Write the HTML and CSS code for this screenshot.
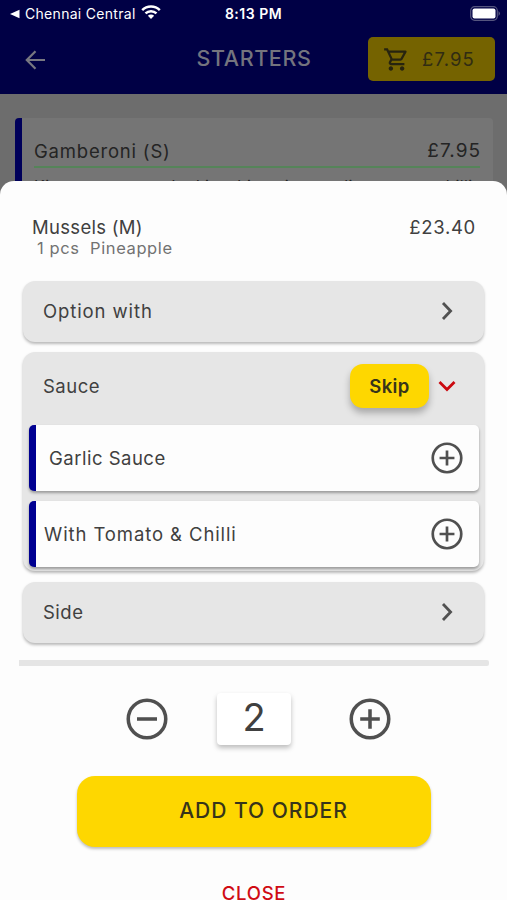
FILE: index.html
```html
<!DOCTYPE html>
<html lang="en">
<head>
<meta charset="utf-8">
<meta name="viewport" content="width=device-width">
<title>Starters</title>
<link rel="stylesheet" href="styles.css">
</head>
<body>
<svg class="defs" width="0" height="0" aria-hidden="true">
  <symbol id="plus" viewBox="0 0 24 24"><circle cx="12" cy="12" r="9" /><path d="M12 7.300v9.400M7.300 12h9.400" /></symbol>
  <symbol id="minus" viewBox="0 0 24 24"><circle cx="12" cy="12" r="9" /><path d="M7.200 12h9.600" /></symbol>
  <symbol id="chevron" viewBox="0 0 12 20"><path d="M2 2l7.600 8L2 18" /></symbol>
</svg>
<div class="screen">
  <header class="header">
    <div class="status">
      <div class="carrier">
        <svg width="10" height="10" viewBox="0 0 10 10"><path d="M0 5L9.500 .8v8.400z" fill="#fff" /></svg>
        <span>Chennai Central</span>
        <svg class="wifi" width="20" height="14" viewBox="0 0 20 14" fill="none" stroke="#fff" stroke-width="2.5"><path d="M1.200 5.200a12.500 12.500 0 0 1 17.600 0M4.500 8.400a7.800 7.800 0 0 1 11 0" /><path d="M6.900 10.700a4.400 4.400 0 0 1 6.200 0L10 13.900z" fill="#fff" stroke="none" /></svg>
      </div>
      <span class="time">8:13 PM</span>
      <svg class="battery" width="31" height="15" viewBox="0 0 31 15"><rect x=".7" y=".7" width="26.600" height="13.600" rx="4" fill="none" stroke="#55557f" stroke-width="1.2" /><rect x="2.500" y="2.500" width="23" height="10" rx="2" fill="#fff" /><path d="M28.500 5v5q3-2.500 0-5" fill="#55557f" /></svg>
    </div>
    <div class="nav">
      <svg class="back" width="22" height="20" viewBox="0 0 22 20"><path d="M20 10H2M10.500 1.200L1.800 10l8.700 8.800" /></svg>
      <h1 class="title">STARTERS</h1>
      <div class="cart">
        <svg width="27" height="27" viewBox="0 0 24 24" fill="#27240f"><path d="M15.550 13c.75 0 1.410-.41 1.750-1.030l3.580-6.490c.37-.66-.11-1.480-.87-1.480H5.210L4.270 2H1v2h2l3.600 7.590-1.350 2.440C4.520 15.370 5.480 17 7 17h12v-2H7l1.100-2h7.450zM6.160 6h12.150l-2.760 5H8.530L6.160 6zM7 18c-1.100 0-1.990.9-1.990 2S5.900 22 7 22s2-.9 2-2-.9-2-2-2zm10 0c-1.100 0-1.990.9-1.990 2s.89 2 1.990 2 2-.9 2-2-.9-2-2-2z" /></svg>
        <span>£7.95</span>
      </div>
    </div>
  </header>
  <article class="dish">
    <div class="dish-head"><span>Gamberoni (S)</span><span class="price">£7.95</span></div>
    <p class="dish-info">King prawns, cooked in white wine, garlic, tomato, chilli</p>
  </article>
  <main class="sheet">
    <div class="item-head"><span class="item-name">Mussels (M)</span><span class="item-price">£23.40</span></div>
    <div class="item-sub">1 pcs&nbsp; Pineapple</div>
    <section class="group">
      <div class="group-row"><span class="wide">Option with</span><svg class="chevron" width="12" height="20"><use href="#chevron" /></svg></div>
    </section>
    <section class="group open">
      <div class="group-row"><span>Sauce</span><button class="skip">Skip</button><svg class="down" width="18" height="12" viewBox="0 0 18 12"><path d="M1.500 2L9 9.500 16.500 2" /></svg></div>
      <div class="choice first"><span>Garlic Sauce</span><svg class="round" width="38" height="38"><use href="#plus" /></svg></div>
      <div class="choice"><span class="wide">With Tomato &amp; Chilli</span><svg class="round" width="38" height="38"><use href="#plus" /></svg></div>
    </section>
    <section class="group side">
      <div class="group-row"><span>Side</span><svg class="chevron" width="12" height="20"><use href="#chevron" /></svg></div>
    </section>
    <div class="divider"></div>
    <div class="quantity">
      <svg class="round" width="50" height="50"><use href="#minus" /></svg>
      <div class="count">2</div>
      <svg class="round" width="50" height="50"><use href="#plus" /></svg>
    </div>
    <button class="add">ADD TO ORDER</button>
    <div class="close">CLOSE</div>
  </main>
</div>
</body>
</html>
```
FILE: styles.css
```css
* { box-sizing: border-box; }
body { margin: 0; font-family: Inter, "Liberation Sans", sans-serif; color: #404040; }
button { border: 0; padding: 0; font-family: inherit; }
.defs { position: absolute; }
.screen { position: relative; width: 507px; height: 900px; overflow: hidden; background: #6d6d6d; }
.header { height: 94px; background: #000045; }
.status { height: 27px; display: grid; grid-template-columns: 1fr auto 1fr; align-items: center; padding: 0 6px 0 10px; color: #fff; }
.carrier { display: flex; align-items: center; gap: 5px; font-size: 14px; letter-spacing: .3px; }
.carrier .wifi { margin-top: -3px; }
.time { margin-left: -4px; font-size: 14px; font-weight: 600; letter-spacing: .5px; }
.battery { justify-self: end; }
.nav { display: grid; grid-template-columns: 1fr auto 1fr; align-items: center; height: 65px; padding: 0 12px 0 25px; }
.back { fill: none; stroke: #777781; stroke-width: 2.2; }
.title { margin: -3px 12px 0 0; font-size: 21.500px; line-height: 24px; font-weight: 450; color: #74747e; letter-spacing: .6px; }
.cart { justify-self: end; width: 127px; height: 44px; margin-top: -1px; padding-left: 15px; display: flex; align-items: center; gap: 12px; background: #756300; border-radius: 5px; color: #302c13; font-size: 18.500px; letter-spacing: 1.1px; }
.dish { margin: 24px 14px 0 15px; height: 120px; background: #757575; border-left: 7px solid #00005a; border-radius: 4px; padding: 20px 13px 0 12px; color: #242424; }
.dish-head { display: flex; justify-content: space-between; height: 30px; line-height: 26px; border-bottom: 2px solid #558459; font-size: 18.500px; letter-spacing: .8px; }
.dish-head .price { font-size: 19px; letter-spacing: 1px; margin-right: -1px; }
.dish-info { margin: 8px 0 0; font-size: 16px; line-height: 20px; letter-spacing: .35px; white-space: nowrap; }
.sheet { position: absolute; inset: 181px 0 0; padding: 34px 18px 0 19px; background: #fdfdfd; border-radius: 14px 14px 0 0; }
.item-head { display: flex; justify-content: space-between; padding: 0 13px; font-size: 18.500px; line-height: 24px; letter-spacing: .3px; }
.item-price { letter-spacing: .7px; }
.item-sub { padding-left: 18px; font-size: 16.500px; line-height: 19px; height: 42px; color: #727272; letter-spacing: .6px; }
.group { margin: 0 5px 10px 4px; height: 61px; background: #e6e6e6; border-radius: 12px; box-shadow: 0 2px 3px #00000045; padding: 0 5px; }
.group-row { height: 60px; display: flex; align-items: center; padding: 0 26px 0 15px; font-size: 18.500px; letter-spacing: .5px; }
.group-row span { flex: 1; }
.group-row .wide, .choice .wide { letter-spacing: .9px; }
.chevron { fill: none; stroke: #515151; stroke-width: 2.8; }
.open { height: 219px; padding: 0 5px 0 6px; margin-bottom: 11px; }
.open .group-row { height: 73px; padding: 0 23px 5px 14px; }
.skip { width: 79px; height: 44px; margin-right: 9px; border-radius: 13px; background: #fed700; box-shadow: 0 5px 7px #00000045; font-size: 18.500px; font-weight: 600; letter-spacing: .4px; color: #37341a; }
.down { fill: none; stroke: #cb0a10; stroke-width: 2.8; }
.choice { height: 66px; margin-bottom: 10px; display: flex; align-items: center; justify-content: space-between; background: #fdfdfd; border-left: 7px solid #000091; border-radius: 5px; box-shadow: 0 2px 3px #00000055; padding: 0 13px 0 8px; font-size: 18.500px; letter-spacing: .5px; }
.choice.first { padding-left: 13px; }
.round { fill: none; stroke: #505050; stroke-width: 1.7; }
.group.side { margin-bottom: 17px; }
.divider { height: 6px; background: #e5e5e5; border-radius: 0 2px 2px 0; }
.quantity { display: flex; align-items: center; height: 106px; padding-left: 103px; }
.count { width: 74px; height: 52px; margin: 0 54px 0 45px; background: #fff; border-radius: 4px; box-shadow: 0 3px 5px #00000040; text-align: center; font-size: 38px; line-height: 48px; }
.add { display: block; width: 354px; height: 71px; margin: 4px auto 0 58px; padding: 0 0 3px 19px; border-radius: 18px; background: #fed700; box-shadow: 0 2px 3px #00000040; color: #37341a; font-size: 21px; font-weight: 550; letter-spacing: 1px; }
.close { margin-top: 34px; text-align: center; font-size: 18.500px; line-height: 24px; font-weight: 550; letter-spacing: .7px; color: #d00b13; }
```
